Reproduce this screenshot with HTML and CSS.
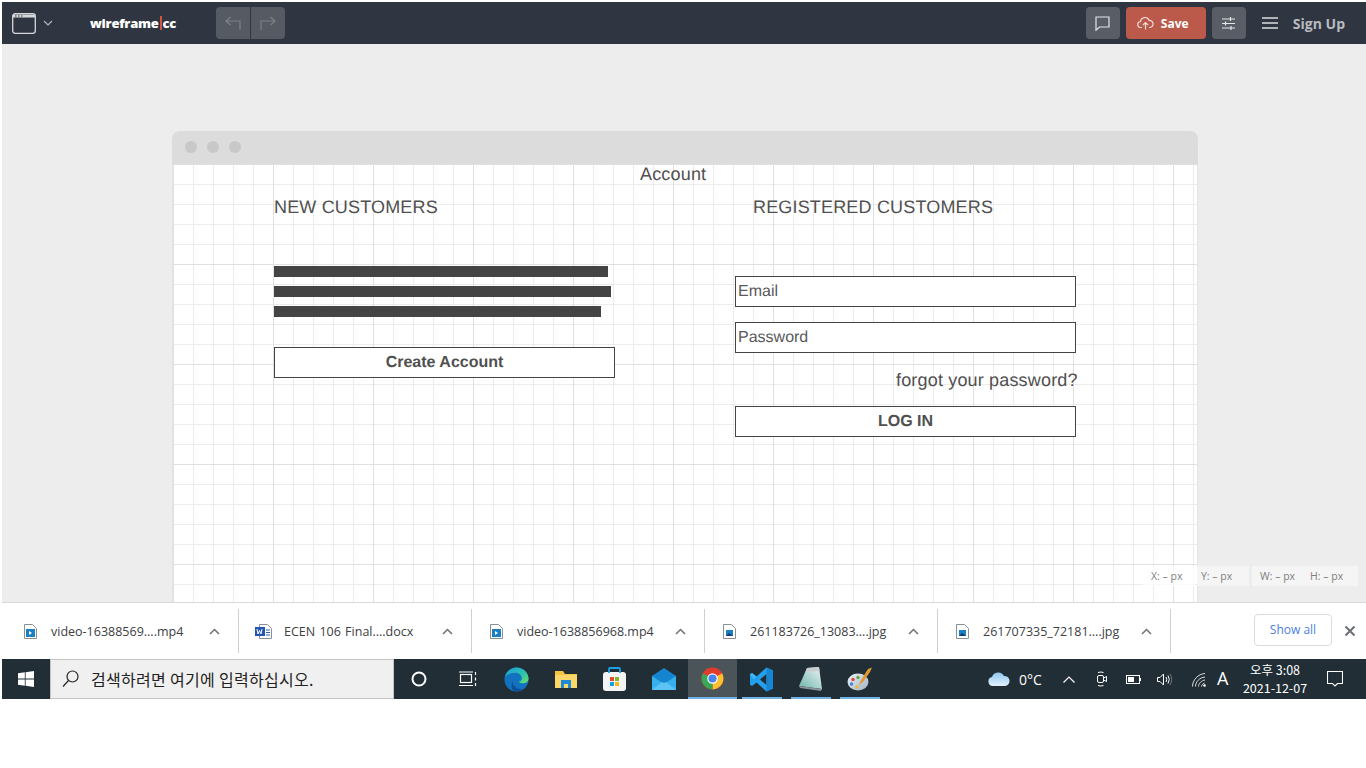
FILE: index.html
```html
<!DOCTYPE html>
<html lang="en">
<head>
    <meta charset="UTF-8">
    <title>wireframe.cc</title>
    <link rel="stylesheet" href="styles.css">
</head>
<body>
<div id="screen">
    <header class="topbar">
        <svg class="ic-window" width="24" height="21" viewBox="0 0 24 21" fill="none" stroke="#d6d8da" stroke-width="1.300"><rect x=".7" y=".7" width="22.600" height="19.600" rx="2.500"/><path d="M1 1.500h22v3H1z" fill="#d6d8da" stroke="none"/><path d="M3 3h1.500M6 3h1.500M9 3h1.500" stroke="#2f3642" stroke-width="1"/></svg>
        <svg class="ic-chev" width="10" height="6" viewBox="0 0 10 6" fill="none" stroke="#b5b8bd" stroke-width="1.100"><path d="M1 1l4 4 4-4"/></svg>
        <div class="logo">wireframe<span class="logo-bar"></span>cc</div>
        <div class="undo-group">
            <div class="undo-btn"><svg width="16" height="14" viewBox="0 0 16 14" fill="none" stroke="#7d8188" stroke-width="1.200"><path d="M5.500 1L1 5l4.500 4M1 5h14v9"/></svg></div>
            <div class="undo-btn"><svg width="16" height="14" viewBox="0 0 16 14" fill="none" stroke="#7d8188" stroke-width="1.200"><path d="M10.500 1L15 5l-4.500 4M15 5H1v9"/></svg></div>
        </div>
        <div class="top-right">
            <div class="tbtn"><svg width="15" height="15" viewBox="0 0 15 15" fill="none" stroke="#e4e5e7" stroke-width="1.200"><path d="M1 1h13v10H4.500L1 14.200z"/></svg></div>
            <div class="save-btn">
                <svg width="17" height="14" viewBox="0 0 17 14" fill="none" stroke="#f4dcd7" stroke-width="1.200"><path d="M5 11.500H4a3 3 0 0 1-.5-6A4.500 4.500 0 0 1 12.200 4.500a3.500 3.500 0 0 1 .8 7h-1M8.500 13.500V6.500M6 9l2.500-2.500L11 9"/></svg>
                <span>Save</span>
            </div>
            <div class="tbtn"><svg width="15" height="15" viewBox="0 0 15 15" fill="none" stroke="#e4e5e7" stroke-width="1.200"><path d="M1 3h13M1 7.500h13M1 12h13M9.500 1v4M4.500 5.500v4M10 10v4"/></svg></div>
            <svg class="ic-menu" width="16" height="12" viewBox="0 0 16 12" fill="none" stroke="#dcdde0" stroke-width="1.300"><path d="M0 1h16M0 6h16M0 11h16"/></svg>
            <div class="signup">Sign Up</div>
        </div>
    </header>

    <main class="workspace">
        <div class="browser">
            <div class="browser-bar">
                <span class="dot"></span><span class="dot"></span><span class="dot"></span>
            </div>
            <div class="canvas">
                <div class="wf wf-title">Account</div>
                <div class="wf wf-new">NEW CUSTOMERS</div>
                <div class="wf wf-reg">REGISTERED CUSTOMERS</div>
                <div class="wf wf-line line1"></div>
                <div class="wf wf-line line2"></div>
                <div class="wf wf-line line3"></div>
                <div class="wf wf-btn btn-create">Create Account</div>
                <div class="wf wf-input input-email">Email</div>
                <div class="wf wf-input input-pass">Password</div>
                <div class="wf wf-forgot">forgot your password?</div>
                <div class="wf wf-btn btn-login">LOG IN</div>
            </div>
        </div>
        <div class="coords">
            <div class="coord-box c-x">X: – px</div>
            <div class="coord-box c-y">Y: – px</div>
            <div class="coord-box c-wh"><span>W: – px</span><span>H: – px</span></div>
        </div>
    </main>

    <div class="downloads">
        <div class="dl-item">
            <svg class="file" width="13" height="15" viewBox="0 0 13 15"><path d="M.5.500h8l4 4v10H.5z" fill="#fff" stroke="#8a8f96"/><rect x="2" y="5" width="9" height="8" fill="#1a7fc4"/><path d="M5 7l3 2-3 2z" fill="#fff"/></svg>
            <span class="dl-name">video-16388569....mp4</span>
            <svg class="caret" width="11" height="7" viewBox="0 0 11 7" fill="none" stroke="#707070" stroke-width="1.500"><path d="M1 6l4.500-4.500L10 6"/></svg>
        </div>
        <div class="dl-item">
            <svg class="file word" width="17" height="15" viewBox="0 0 17 15"><path d="M4.500.500h8l4 4v10h-12z" fill="#fff" stroke="#8a8f96"/><path d="M11 6h4M11 8.500h4M11 11h4" stroke="#2b5fb4"/><rect x="0" y="3" width="10" height="9" fill="#2257b5"/><path d="M2 5l1 5 1.500-3.500L6 10l1-5" fill="none" stroke="#fff"/></svg>
            <span class="dl-name">ECEN 106 Final....docx</span>
            <svg class="caret" width="11" height="7" viewBox="0 0 11 7" fill="none" stroke="#707070" stroke-width="1.500"><path d="M1 6l4.500-4.500L10 6"/></svg>
        </div>
        <div class="dl-item">
            <svg class="file" width="13" height="15" viewBox="0 0 13 15"><path d="M.5.500h8l4 4v10H.5z" fill="#fff" stroke="#8a8f96"/><rect x="2" y="5" width="9" height="8" fill="#1a7fc4"/><path d="M5 7l3 2-3 2z" fill="#fff"/></svg>
            <span class="dl-name">video-1638856968.mp4</span>
            <svg class="caret" width="11" height="7" viewBox="0 0 11 7" fill="none" stroke="#707070" stroke-width="1.500"><path d="M1 6l4.500-4.500L10 6"/></svg>
        </div>
        <div class="dl-item">
            <svg class="file" width="13" height="15" viewBox="0 0 13 15"><path d="M.5.500h8l4 4v10H.5z" fill="#fff" stroke="#8a8f96"/><rect x="3" y="6" width="7" height="6" fill="#1a7fc4"/><path d="M3 12l3-3 4 3z" fill="#123e74"/></svg>
            <span class="dl-name">261183726_13083....jpg</span>
            <svg class="caret" width="11" height="7" viewBox="0 0 11 7" fill="none" stroke="#707070" stroke-width="1.500"><path d="M1 6l4.500-4.500L10 6"/></svg>
        </div>
        <div class="dl-item">
            <svg class="file" width="13" height="15" viewBox="0 0 13 15"><path d="M.5.500h8l4 4v10H.5z" fill="#fff" stroke="#8a8f96"/><rect x="3" y="6" width="7" height="6" fill="#1a7fc4"/><path d="M3 12l3-3 4 3z" fill="#123e74"/></svg>
            <span class="dl-name">261707335_72181....jpg</span>
            <svg class="caret" width="11" height="7" viewBox="0 0 11 7" fill="none" stroke="#707070" stroke-width="1.500"><path d="M1 6l4.500-4.500L10 6"/></svg>
        </div>
        <div class="dl-right">
            <div class="show-all">Show all</div>
            <svg class="dl-close" width="12" height="12" viewBox="0 0 12 12" fill="none" stroke="#6b6f74" stroke-width="2"><path d="M1.500 1.500l9 9M10.500 1.500l-9 9"/></svg>
        </div>
    </div>

    <footer class="taskbar">
        <div class="start">
            <svg width="16" height="16" viewBox="0 0 16 16" fill="#fff"><path d="M0 2.300L6.800 1.300v6.300H0zM7.600 1.200L16 0v7.600H7.600zM0 8.400h6.800v6.300L0 13.700zM7.600 8.400H16V16l-8.400-1.200z"/></svg>
        </div>
        <div class="search">
            <svg width="17" height="18" viewBox="0 0 17 18" fill="none" stroke="#222" stroke-width="1.200"><circle cx="10.500" cy="6.500" r="5.500"/><path d="M6.500 10.500L1 16.500"/></svg>
            <span>검색하려면 여기에 입력하십시오.</span>
        </div>
        <div class="tb-apps">
            <div class="tb-app"><svg width="16" height="16" viewBox="0 0 16 16" fill="none" stroke="#fff" stroke-width="2"><circle cx="8" cy="8" r="6.500"/></svg></div>
            <div class="tb-app"><svg width="18" height="16" viewBox="0 0 18 16" fill="none" stroke="#fff" stroke-width="1.200"><rect x="1.500" y="3.500" width="11" height="8"/><path d="M0 1h14M0 14.500h14M16.500 1v3M16.500 6.500v3M16.500 12v3"/></svg></div>
            <div class="tb-app"><svg width="25" height="25" viewBox="0 0 26 26"><defs><linearGradient id="edgeA" x1="0" y1="0" x2="1" y2="1"><stop offset="0" stop-color="#1b9de2"/><stop offset=".6" stop-color="#2fc4a8"/><stop offset="1" stop-color="#6fe06a"/></linearGradient></defs><circle cx="13" cy="13" r="12.500" fill="#1272bf"/><path d="M.8 11C2.500 4 8 .5 13 .5 20 .5 25.500 6 25.500 12c0 3.500-3 5-6 5-2 0-4-1-4-2 2 0 3-1.500 3-3C18.500 8 15 5.500 11 6 6 6.500 2 8 .8 11z" fill="url(#edgeA)"/><path d="M9 15c0 5 5 9 11 7.500-2 1.500-4.500 3-7 3C6 25.500 8 17 9 15z" fill="#0e4f96"/></svg></div>
            <div class="tb-app"><svg width="22" height="18" viewBox="0 0 22 18"><path d="M0 1h8l2 3h12v14H0z" fill="#f5c542"/><path d="M0 5h22v13H0z" fill="#fbd668"/><rect x="6" y="10" width="10" height="8" fill="#1d88d6"/><rect x="9" y="14" width="4" height="4" fill="#fbd668"/></svg></div>
            <div class="tb-app"><svg width="23" height="24" viewBox="0 0 23 24"><rect x="0" y="5" width="23" height="19" rx="3" fill="#f4f4f4"/><path d="M6 6V2q0-1 1-1h9q1 0 1 1v4" fill="none" stroke="#1ca0e8" stroke-width="1.800"/><rect x="7" y="10" width="4" height="4" fill="#e74b2b"/><rect x="12" y="10" width="4" height="4" fill="#7db82f"/><rect x="7" y="15" width="4" height="4" fill="#12a0e8"/><rect x="12" y="15" width="4" height="4" fill="#f7b719"/></svg></div>
            <div class="tb-app"><svg width="24" height="22" viewBox="0 0 24 22"><path d="M0 8L12 0l12 8v14H0z" fill="#1585cf"/><path d="M0 8l12 8 12-8v14H0z" fill="#36b1ee"/><path d="M0 22l10-8 2 1 2-1 10 8z" fill="#5cc4f5"/></svg></div>
            <div class="tb-app active"><svg width="23" height="23" viewBox="0 0 48 48"><circle cx="24" cy="24" r="23" fill="#e13b2e"/><path d="M24 24L44 13A23 23 0 0 1 24 47z" fill="#fbc02d"/><path d="M24 24L24 47A23 23 0 0 1 4 13z" fill="#3aa757"/><circle cx="24" cy="24" r="11" fill="#fff"/><circle cx="24" cy="24" r="8.500" fill="#4a83ec"/></svg></div>
            <div class="tb-app open"><svg width="25" height="25" viewBox="0 0 100 100"><path fill-rule="evenodd" d="M70 2L96 14V86L70 98 30 62 12 76 4 71V29L12 24 30 38zM70 28L44 50 70 72z" fill="#23a0ec"/><path d="M70 2L96 14V86L70 98V72z" fill="#1585d4"/><path d="M30 38L12 24 4 29 20 50z" fill="#45b4f5"/></svg></div>
            <div class="tb-app open"><svg width="23" height="24" viewBox="0 0 23 24"><defs><linearGradient id="padA" x1="1" y1="0" x2="0" y2="1"><stop offset="0" stop-color="#eef3f3"/><stop offset="1" stop-color="#6db5ad"/></linearGradient></defs><path d="M8 1L20 0l3 22-23-3z" fill="url(#padA)"/><path d="M8 1L20 0l.6 4L6.500 5z" fill="#c9cdd0"/><path d="M0 19l23 3-1 2L1 21z" fill="#8a9296"/></svg></div>
            <div class="tb-app open"><svg width="26" height="25" viewBox="0 0 26 25"><defs><linearGradient id="palA" x1="0" y1="0" x2="1" y2="1"><stop offset="0" stop-color="#eef2f5"/><stop offset="1" stop-color="#9fb2c4"/></linearGradient></defs><ellipse cx="11" cy="15" rx="10.500" ry="8.500" fill="url(#palA)"/><circle cx="6" cy="12.500" r="1.700" fill="#d4453a"/><circle cx="11" cy="10.500" r="1.700" fill="#5aa945"/><circle cx="4.500" cy="17" r="1.700" fill="#3c86d6"/><circle cx="10" cy="20" r="1.700" fill="#f2b632"/><path d="M25 .5L21 2 14 13l-2 5 4-3 7-10z" fill="#e09a35"/></svg></div>
        </div>
        <div class="tray">
            <svg class="t-cloud" width="22" height="15" viewBox="0 0 22 15"><defs><linearGradient id="cloudA" x1="0" y1="0" x2="0" y2="1"><stop offset="0" stop-color="#8ec7f0"/><stop offset="1" stop-color="#e4f1fb"/></linearGradient></defs><path d="M5 15a4.500 4.500 0 0 1-1-8.900A6.500 6.500 0 0 1 16 5a5 5 0 0 1 1 10z" fill="url(#cloudA)"/></svg>
            <span class="t-temp">0°C</span>
            <svg class="t-up" width="12" height="7" viewBox="0 0 12 7" fill="none" stroke="#fff" stroke-width="1.200"><path d="M.5 6.500L6 1l5.500 5.500"/></svg>
            <svg class="t-meet" width="12" height="16" viewBox="0 0 12 16" fill="none" stroke="#fff"><rect x="1.500" y="4.500" width="6" height="7" rx="1.500"/><path d="M7.500 7l3-1.500v5l-3-1.500M2 1.500q3-1 5.500 0M2 14.500q3 1 5.500 0"/></svg>
            <svg class="t-batt" width="15" height="9" viewBox="0 0 15 9"><rect x=".5" y=".5" width="13" height="8" fill="none" stroke="#fff"/><rect x="2" y="2" width="6" height="5" fill="#fff"/><rect x="14" y="3" width="1" height="3" fill="#fff"/></svg>
            <svg class="t-vol" width="16" height="13" viewBox="0 0 16 13" fill="none" stroke="#fff"><path d="M.5 4.500h2.500L6.500 1v11L3 8.500H.5zM9 4q1.500 2.500 0 5M11 2.500q2.500 4 0 8"/><path d="M13 1q3.500 5.500 0 11" stroke="#777"/></svg>
            <svg class="t-wifi" width="14" height="14" viewBox="0 0 14 14" fill="none" stroke="#ddd"><path d="M.5 13.500C.5 7 6 1 13 .5M3.500 13.500c0-4.500 4-9 9.500-9.500M6.500 13.500c0-3 3-6 6.500-6.500M9.500 13.500c0-1.500 1.500-3 3-3.500"/><circle cx="12.500" cy="12.500" r="1.300" fill="#fff" stroke="none"/></svg>
            <span class="t-ime">A</span>
            <div class="t-clock"><div>오후 3:08</div><div>2021-12-07</div></div>
            <svg class="t-note" width="16" height="16" viewBox="0 0 16 16" fill="none" stroke="#fff" stroke-width="1.100"><path d="M.5.500h15v12H10.500L8 15l-2.500-2.500H.5z"/></svg>
        </div>
    </footer>
</div>
</body>
</html>
```

FILE: styles.css
```css
* {
    box-sizing: border-box;
}
html, body {
    margin: 0;
    height: 100%;
    background: #fff;
    overflow: hidden;
}
#screen {
    height: 699px;
    padding: 2px 0 0 2px;
    display: flex;
    flex-direction: column;
    font-family: "Open Sans", sans-serif;
}

/* top bar */
.topbar {
    height: 42px;
    flex: none;
    background: #2f3642;
    display: flex;
    align-items: center;
    padding-left: 10px;
}
.ic-window {
    margin-right: 7px;
}
.ic-chev {
    margin-right: 37px;
}
.logo {
    width: 126px;
    color: #fff;
    font-size: 13px;
    font-weight: 800;
    letter-spacing: -.25px;
}
.logo-bar {
    display: inline-block;
    width: 2px;
    height: 14px;
    background: #d4543f;
    margin: 0 1px;
    vertical-align: -2px;
}
.undo-group {
    display: flex;
    gap: 1px;
    height: 32px;
    border-radius: 4px;
    overflow: hidden;
    background: #2f3642;
}
.undo-btn {
    width: 34px;
    background: #555a63;
    display: flex;
    align-items: center;
    justify-content: center;
}
.top-right {
    margin-left: auto;
    display: flex;
    align-items: center;
    gap: 6px;
    padding-right: 21px;
}
.tbtn {
    width: 34px;
    height: 32px;
    background: #585d66;
    border-radius: 4px;
    display: flex;
    align-items: center;
    justify-content: center;
}
.save-btn {
    width: 80px;
    height: 32px;
    background: #bb5a4b;
    border-radius: 4px;
    display: flex;
    align-items: center;
    gap: 7px;
    padding-left: 11px;
    color: #fff;
    font-size: 12px;
    font-weight: 700;
}
.ic-menu {
    margin-left: 10px;
}
.signup {
    margin-left: 9px;
    color: #b9bbbf;
    font-size: 14px;
    font-weight: 700;
}

/* workspace */
.workspace {
    height: 558px;
    flex: none;
    background: #ededed;
    padding: 87px 0 0 170px;
    position: relative;
    overflow: hidden;
}
.browser {
    width: 1026px;
    height: 600px;
    border-radius: 7px 7px 0 0;
    overflow: hidden;
    background: #fff;
}
.browser-bar {
    height: 33px;
    background: #dcdcdc;
    display: flex;
    align-items: center;
    gap: 10px;
    padding: 0 0 1px 13px;
}
.dot {
    width: 12px;
    height: 12px;
    border-radius: 50%;
    background: #c8c8c8;
}
.canvas {
    position: relative;
    height: 567px;
    border-left: 1px solid #e4e4e4;
    border-right: 1px solid #e4e4e4;
    background-color: #fff;
    background-image:
        linear-gradient(to right, #e0e0e0 1px, transparent 1px),
        linear-gradient(to bottom, #e0e0e0 1px, transparent 1px),
        linear-gradient(to right, #ececec 1px, transparent 1px),
        linear-gradient(to bottom, #ececec 1px, transparent 1px);
    background-size: 100px 100px, 100px 100px, 20px 20px, 20px 20px;
    background-position: 100px 100px, 100px 100px, 20px 20px, 20px 20px;
}

/* wireframe items */
.wf {
    position: absolute;
    font-family: "Liberation Sans", Arial, sans-serif;
    color: #505050;
    font-size: 18px;
    line-height: 20px;
    letter-spacing: .17px;
    white-space: nowrap;
    text-rendering: geometricPrecision;
}
.wf-title {
    left: 467px;
    top: 0;
}
.wf-new {
    left: 101px;
    top: 33px;
}
.wf-reg {
    left: 580px;
    top: 33px;
}
.wf-line {
    left: 101px;
    height: 11px;
    background: #444;
}
.line1 {
    top: 102px;
    width: 334px;
}
.line2 {
    top: 122px;
    width: 337px;
}
.line3 {
    top: 142px;
    width: 327px;
}
.wf-btn {
    height: 31px;
    border: 1px solid #444;
    background: #fff;
    font-size: 16px;
    font-weight: 700;
    line-height: 29px;
    letter-spacing: 0;
    text-align: center;
}
.btn-create {
    left: 101px;
    top: 183px;
    width: 341px;
}
.btn-login {
    left: 562px;
    top: 242px;
    width: 341px;
}
.wf-input {
    left: 562px;
    width: 341px;
    height: 31px;
    border: 1px solid #444;
    background: #fff;
    color: #5a5a5a;
    font-size: 16px;
    line-height: 29px;
    letter-spacing: 0;
    padding-left: 2px;
}
.input-email {
    top: 112px;
}
.input-pass {
    top: 158px;
}
.wf-forgot {
    left: 723px;
    top: 206px;
}

/* size readout */
.coords {
    position: absolute;
    left: 1141px;
    top: 522px;
    display: flex;
    gap: 2px;
    color: #808080;
    font-size: 10.500px;
}
.coord-box {
    height: 20px;
    line-height: 20px;
    background: #f5f5f5;
}
.c-x {
    width: 52px;
    padding-left: 8px;
    background: rgba(255, 255, 255, .7);
}
.c-y {
    width: 52px;
    padding-left: 4px;
}
.c-wh {
    width: 106px;
    margin-left: 1px;
    padding-left: 8px;
    display: flex;
    gap: 15px;
}

/* downloads bar */
.downloads {
    height: 57px;
    flex: none;
    background: #fff;
    border-top: 1px solid #d9d9d9;
    display: flex;
    align-items: center;
    padding-left: 4px;
}
.dl-item {
    width: 233px;
    height: 44px;
    flex: none;
    padding-left: 18px;
    border-right: 1px solid #d0d0d0;
    display: flex;
    align-items: center;
    position: relative;
}
.dl-item .word {
    margin-left: -2px;
}
.dl-name {
    position: absolute;
    left: 45px;
    color: #3c4043;
    font-size: 12.500px;
    word-spacing: 1px;
    white-space: nowrap;
}
.caret {
    position: absolute;
    left: 203px;
}
.dl-right {
    margin-left: auto;
    display: flex;
    align-items: center;
    padding-right: 10px;
    gap: 12px;
}
.show-all {
    width: 78px;
    height: 32px;
    border: 1px solid #dadce0;
    border-radius: 4px;
    color: #4a7fe0;
    font-size: 12px;
    line-height: 29px;
    text-align: center;
    margin-top: -2px;
}

/* taskbar */
.taskbar {
    height: 40px;
    flex: none;
    background: #212e36;
    display: flex;
    color: #fff;
}
.start {
    width: 48px;
    display: flex;
    align-items: center;
    justify-content: center;
}
.search {
    width: 344px;
    background: #f0f0f0;
    border: 1px solid #c4c4c4;
    display: flex;
    align-items: center;
    gap: 12px;
    padding-left: 11px;
    color: #222;
    font-family: "Noto Sans CJK KR", sans-serif;
    font-size: 16px;
    letter-spacing: .3px;
}
.tb-apps {
    display: flex;
}
.tb-app {
    width: 49px;
    flex: none;
    display: flex;
    align-items: center;
    justify-content: center;
    position: relative;
}
.tb-app.active {
    background: #4b5459;
    border-bottom: 2px solid #6fb3e6;
}
.tb-app.open::after {
    content: "";
    position: absolute;
    left: 5px;
    right: 4px;
    bottom: 0;
    height: 2px;
    background: #6fb3e6;
}
.tray {
    position: relative;
    flex: 1;
}
.tray > * {
    position: absolute;
}
.t-cloud {
    left: 104px;
    top: 12px;
}
.t-temp {
    left: 135px;
    top: 11px;
    font-size: 14px;
}
.t-up {
    left: 179px;
    top: 17px;
}
.t-meet {
    left: 212px;
    top: 12px;
}
.t-batt {
    left: 242px;
    top: 16px;
}
.t-vol {
    left: 273px;
    top: 14px;
}
.t-wifi {
    left: 308px;
    top: 14px;
}
.t-ime {
    left: 333px;
    top: 7px;
    font-size: 18px;
}
.t-clock {
    left: 358px;
    top: 2px;
    width: 66px;
    text-align: center;
    font-family: "Noto Sans CJK KR", sans-serif;
    font-size: 12.500px;
    line-height: 18px;
}
.t-note {
    left: 443px;
    top: 12px;
}
```
